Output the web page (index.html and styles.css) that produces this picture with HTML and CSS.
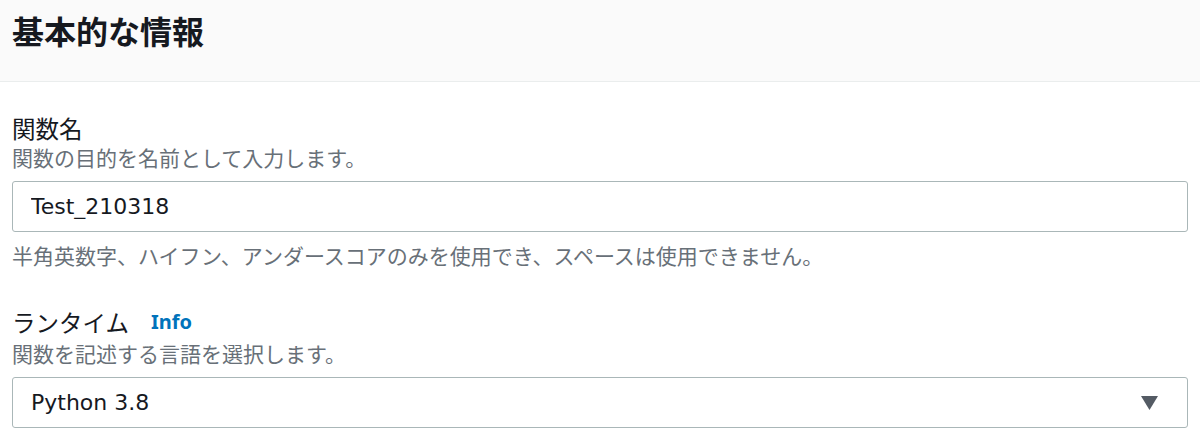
FILE: index.html
```html
<!DOCTYPE html>
<html lang="ja">
<head>
    <meta charset="utf-8">
    <title>基本的な情報</title>
    <link rel="stylesheet" href="styles.css">
</head>
<body>
    <section class="panel">
        <header class="panel-header">
            <h2>基本的な情報</h2>
        </header>

        <div class="panel-body">
            <div class="field">
                <label class="field-label" for="function-name">関数名</label>
                <p class="field-description">関数の目的を名前として入力します。</p>
                <input class="text-input" id="function-name" type="text" value="Test_210318">
                <p class="field-hint">半角英数字、ハイフン、アンダースコアのみを使用でき、スペースは使用できません。</p>
            </div>

            <div class="field -runtime">
                <div class="field-label">ランタイム <a href="#" class="info-link">Info</a></div>
                <p class="field-description">関数を記述する言語を選択します。</p>
                <div class="select">
                    <span class="select-value">Python 3.8</span>
                    <svg class="select-caret" width="17" height="14" viewBox="0 0 17 14"><path d="M0 0 H17 L8.5 14 Z" fill="currentColor" /></svg>
                </div>
            </div>
        </div>
    </section>
</body>
</html>
```

FILE: styles.css
```css
* { box-sizing: border-box; margin: 0; }

body {
    margin: 0;
    background: #fff;
    color: #16191f;
    font-family: "Noto Sans CJK JP", "Noto Sans", sans-serif;
}

.panel-header {
    height: 82px;
    padding: 12px 12px 0;
    background: #fafafa;
    border-bottom: 1px solid #eaeded;
}

.panel-header h2 {
    font-size: 32px;
    line-height: 36px;
    font-weight: 700;
}

.panel-body {
    padding: 0 12px;
}

.field {
    display: flex;
    flex-direction: column;
    margin-top: 31px;
}

.field.-runtime {
    margin-top: 38px;
}

.field-label {
    display: flex;
    align-items: center;
    gap: 22px;
    font-size: 23.5px;
    line-height: 30px;
}

.info-link {
    font-family: "Noto Sans", sans-serif;
    font-size: 20px;
    font-weight: 700;
    color: #0073bb;
    text-decoration: none;
}

.field-description,
.field-hint {
    font-size: 21px;
    line-height: 28px;
    color: #687078;
}

.-runtime .field-description {
    margin-top: 2px;
}

.text-input,
.select {
    height: 51px;
    margin-top: 10px;
    padding: 0 18px;
    border: 1px solid #aab7b8;
    border-radius: 3px;
    background: #fff;
    font-family: "DejaVu Sans", sans-serif;
    font-size: 22px;
    color: #16191f;
}

.text-input {
    width: 100%;
}

.field-hint {
    margin-top: 9px;
}

.select {
    display: flex;
    align-items: center;
    justify-content: space-between;
    margin-top: 10px;
    padding-right: 29px;
}

.select-caret {
    color: #545b64;
}
```
